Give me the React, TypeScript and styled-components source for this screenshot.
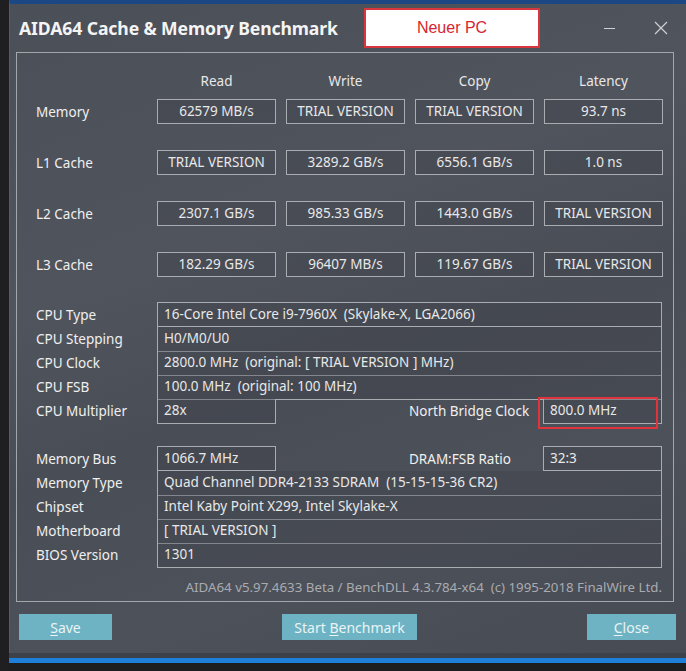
import styled, { createGlobalStyle } from "styled-components";

const GlobalStyle = createGlobalStyle`
	html, body {
		margin: 0;
		padding: 0;
		background: #1d1d1f;
	}
	body {
		font-family: "Noto Sans", "Open Sans", sans-serif;
		color: #ececec;
	}
`;

const Desktop = styled.div`
	display: flex;
	width: 686px;
	height: 671px;
	overflow: hidden;
	background: #1d1d1f;
`;

const LeftEdge = styled.div`
	width: 9px;
	flex-shrink: 0;
	background: #1f1f21;
`;

const Column = styled.div`
	flex: 1;
	display: flex;
	flex-direction: column;
`;

const Window = styled.div`
	border-top: 4px solid #1b4785;
	height: 649px;
	display: flex;
	flex-direction: column;
	background: linear-gradient(160deg, #4b4f58 0%, #50545d 35%, #494d56 55%, #4d515a 75%, #474b54 100%);
	border-left: 1px solid #565b66;
`;

const TitleBar = styled.div`
	height: 48px;
	display: flex;
	align-items: center;
	padding-left: 9px;
	position: relative;
`;

const Title = styled.h1`
	margin: 0;
	font-size: 17.6px;
	font-weight: 700;
	color: #f4f4f4;
	letter-spacing: -0.1px;
`;

const Tag = styled.div`
	position: absolute;
	left: 354px;
	top: 4px;
	width: 172px;
	height: 36px;
	background: #fff;
	border: 2px solid #d8353d;
	display: flex;
	align-items: center;
	justify-content: center;
	color: #d6262f;
	font-family: "Liberation Sans", Arial, sans-serif;
	font-size: 16px;
`;

const WinButtons = styled.div`
	margin-left: auto;
	display: flex;
	align-items: center;
	gap: 38px;
	padding-right: 18px;
	color: #cfd0d2;
`;

const Group = styled.div`
	margin: 0 12px 0 6px;
	height: 550px;
	border: 1px solid #a3a6ab;
	box-sizing: border-box;
	padding: 18px 0 0 19px;
	display: flex;
	flex-direction: column;
`;

const BenchRow = styled.div<{ $gap: number }>`
	display: flex;
	align-items: center;
	gap: 10px;
	margin-bottom: ${p => p.$gap}px;
`;

const RowLabel = styled.div`
	width: 111px;
	font-size: 13.5px;
	color: #f0f0f0;
`;

const HeadCell = styled.div`
	width: 119px;
	height: 20px;
	text-align: center;
	font-size: 13.5px;
	line-height: 20px;
	color: #e8e8e8;
`;

const ValueBox = styled.div`
	width: 119px;
	height: 25px;
	box-sizing: border-box;
	border: 1px solid #a9acb1;
	background: rgba(60, 64, 72, 0.35);
	text-align: center;
	line-height: 23px;
	font-size: 13.5px;
	color: #e8e8e8;
	white-space: nowrap;
`;

const InfoSection = styled.div<{ $top: number }>`
	margin-top: ${p => p.$top}px;
	display: flex;
	flex-direction: column;
`;

const InfoRow = styled.div`
	display: grid;
	grid-template-columns: 121px 119px 1fr 119px;
	height: 24px;
	align-items: center;
	width: 626px;
`;

const InfoLabel = styled.div`
	font-size: 13.5px;
	color: #f0f0f0;
`;

const InfoBox = styled.div<{ $span?: number; $first?: boolean }>`
	grid-column: span ${p => p.$span || 1};
	height: 25px;
	box-sizing: border-box;
	border: 1px solid #a9acb1;
	border-top-width: ${p => (p.$first ? 1 : 0)}px;
	margin-top: ${p => (p.$first ? 0 : 1)}px;
	align-self: ${p => (p.$first ? "center" : "end")};
	padding-left: 6px;
	font-size: 13.5px;
	line-height: 23px;
	color: #e8e8e8;
	background: rgba(60, 64, 72, 0.35);
	white-space: nowrap;
	overflow: hidden;
`;

const HighlightBox = styled(InfoBox)`
	overflow: visible;
	position: relative;
`;

const MidLabel = styled.div`
	padding-left: 133px;
	font-size: 13.5px;
	color: #f0f0f0;
	white-space: nowrap;
`;

const Highlight = styled.div`
	position: absolute;
	left: -6px;
	top: -2px;
	width: 116px;
	height: 28px;
	border: 2px solid #e0333c;
	pointer-events: none;
`;

const Spacer = styled.div`
	height: 24px;
`;

const Footer = styled.div`
	margin-top: 12px;
	width: 626px;
	text-align: right;
	font-size: 13.3px;
	color: #a9abb0;
`;

const ButtonBar = styled.div`
	display: flex;
	align-items: center;
	height: 26px;
	margin-top: 12px;
	padding-left: 9px;
`;

const Button = styled.button<{ $w: number; $ml: number }>`
	width: ${p => p.$w}px;
	margin-left: ${p => p.$ml}px;
	height: 26px;
	border: none;
	background: #6db3c3;
	color: #eaf3f5;
	font-family: inherit;
	font-size: 14px;
	padding: 0;
	u {
		text-decoration-thickness: 1px;
		text-underline-offset: 2px;
	}
`;

const BottomBand = styled.div`
	height: 5px;
	background: #3d4149;
`;

const TaskLine = styled.div`
	height: 5px;
	background: #1d7fd9;
`;

const rows = [
	{ label: "Memory", values: ["62579 MB/s", "TRIAL VERSION", "TRIAL VERSION", "93.7 ns"] },
	{ label: "L1 Cache", values: ["TRIAL VERSION", "3289.2 GB/s", "6556.1 GB/s", "1.0 ns"] },
	{ label: "L2 Cache", values: ["2307.1 GB/s", "985.33 GB/s", "1443.0 GB/s", "TRIAL VERSION"] },
	{ label: "L3 Cache", values: ["182.29 GB/s", "96407 MB/s", "119.67 GB/s", "TRIAL VERSION"] },
];

const cols = ["Read", "Write", "Copy", "Latency"];

function App() {
	return (
		<Desktop>
			<GlobalStyle />
			<LeftEdge />
			<Column>
				<Window>
					<TitleBar>
						<Title>AIDA64 Cache &amp; Memory Benchmark</Title>
						<Tag>Neuer PC</Tag>
						<WinButtons>
							<svg width="12" height="12" viewBox="0 0 12 12">
								<line x1="0" y1="6.5" x2="11" y2="6.5" stroke="currentColor" strokeWidth="1" />
							</svg>
							<svg width="14" height="14" viewBox="0 0 14 14">
								<path d="M1 1 L13 13 M13 1 L1 13" stroke="currentColor" strokeWidth="1.2" fill="none" />
							</svg>
						</WinButtons>
					</TitleBar>
					<Group>
						<BenchRow $gap={8}>
							<RowLabel />
							{cols.map(c => (
								<HeadCell key={c}>{c}</HeadCell>
							))}
						</BenchRow>
						{rows.map((r, i) => (
							<BenchRow key={r.label} $gap={i === rows.length - 1 ? 0 : 26}>
								<RowLabel>{r.label}</RowLabel>
								{r.values.map((v, j) => (
									<ValueBox key={j}>{v}</ValueBox>
								))}
							</BenchRow>
						))}

						<InfoSection $top={25}>
							<InfoRow>
								<InfoLabel>CPU Type</InfoLabel>
								<InfoBox $span={3} $first>16-Core Intel Core i9-7960X &nbsp;(Skylake-X, LGA2066)</InfoBox>
							</InfoRow>
							<InfoRow>
								<InfoLabel>CPU Stepping</InfoLabel>
								<InfoBox $span={3}>H0/M0/U0</InfoBox>
							</InfoRow>
							<InfoRow>
								<InfoLabel>CPU Clock</InfoLabel>
								<InfoBox $span={3}>2800.0 MHz &nbsp;(original: [ TRIAL VERSION ] MHz)</InfoBox>
							</InfoRow>
							<InfoRow>
								<InfoLabel>CPU FSB</InfoLabel>
								<InfoBox $span={3}>100.0 MHz &nbsp;(original: 100 MHz)</InfoBox>
							</InfoRow>
							<InfoRow>
								<InfoLabel>CPU Multiplier</InfoLabel>
								<InfoBox>28x</InfoBox>
								<MidLabel>North Bridge Clock</MidLabel>
								<HighlightBox>
									800.0 MHz
									<Highlight />
								</HighlightBox>
							</InfoRow>
							<Spacer />
							<InfoRow>
								<InfoLabel>Memory Bus</InfoLabel>
								<InfoBox $first>1066.7 MHz</InfoBox>
								<MidLabel>DRAM:FSB Ratio</MidLabel>
								<InfoBox $first>32:3</InfoBox>
							</InfoRow>
							<InfoRow>
								<InfoLabel>Memory Type</InfoLabel>
								<InfoBox $span={3}>Quad Channel DDR4-2133 SDRAM &nbsp;(15-15-15-36 CR2)</InfoBox>
							</InfoRow>
							<InfoRow>
								<InfoLabel>Chipset</InfoLabel>
								<InfoBox $span={3}>Intel Kaby Point X299, Intel Skylake-X</InfoBox>
							</InfoRow>
							<InfoRow>
								<InfoLabel>Motherboard</InfoLabel>
								<InfoBox $span={3}>[ TRIAL VERSION ]</InfoBox>
							</InfoRow>
							<InfoRow>
								<InfoLabel>BIOS Version</InfoLabel>
								<InfoBox $span={3}>1301</InfoBox>
							</InfoRow>
						</InfoSection>
						<Footer>AIDA64 v5.97.4633 Beta / BenchDLL 4.3.784-x64 &nbsp;(c) 1995-2018 FinalWire Ltd.</Footer>
					</Group>
					<ButtonBar>
						<Button $w={93} $ml={0}><u>S</u>ave</Button>
						<Button $w={135} $ml={170}>Start <u>B</u>enchmark</Button>
						<Button $w={89} $ml={170}><u>C</u>lose</Button>
					</ButtonBar>
				</Window>
				<BottomBand />
				<TaskLine />
			</Column>
		</Desktop>
	);
}

export default App;
